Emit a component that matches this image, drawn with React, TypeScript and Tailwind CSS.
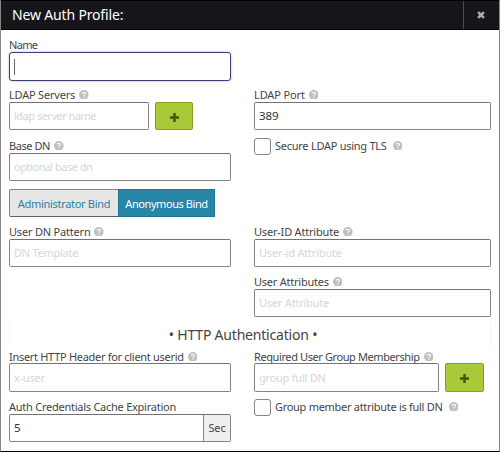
import type { ReactNode } from 'react';

function Help({ className = 'ml-1' }: { className?: string }) {
  return (
    <svg viewBox="0 0 10 10" className={`h-[9.6px] w-[9.6px] shrink-0 ${className}`}>
      <circle cx="5" cy="5" r="5" fill="#bfbfbf" />
      <path d="M3.3 3.9C3.4 2.9 4.1 2.3 5 2.3C6 2.3 6.7 2.9 6.7 3.7C6.7 4.8 5.1 4.9 5.1 6" fill="none" stroke="#fff" strokeWidth="1.2" />
      <rect x="4.5" y="6.8" width="1.2" height="1.2" fill="#fff" />
    </svg>
  );
}

function Label({ children, className = '', help = true, low = false }: { children: ReactNode; className?: string; help?: boolean; low?: boolean }) {
  return (
    <div className={`flex h-[15px] items-center whitespace-nowrap text-[#444] ${low ? 'pt-0.5' : ''}`}>
      <span className={className}>{children}</span>
      {help && <Help />}
    </div>
  );
}

function Input({ children, className = '', filled = false, size = 'h-7' }: { children?: ReactNode; className?: string; filled?: boolean; size?: string }) {
  return (
    <div className={`flex items-center rounded-[2px] border border-[#858585] border-t-[#737373] bg-white pl-1 pb-px ${size} ${filled ? 'text-[11.5px] text-[#333]' : 'text-[#d6d6d6]'}`}>
      <span className={`whitespace-nowrap ${className}`}>{children}</span>
    </div>
  );
}

function AddButton({ className = '' }: { className?: string }) {
  return (
    <button className={`flex items-center justify-center rounded-[2px] border border-[#81a021] bg-[#a9c938] pt-0.5 ${className}`}>
      <svg viewBox="0 0 9 9" className="h-[9px] w-[9px]">
        <path d="M3.3 0h2.4v3.3H9v2.4H5.7V9H3.3V5.7H0V3.3h3.3z" fill="#43530e" />
      </svg>
    </button>
  );
}

function Check({ children, className }: { children: ReactNode; className: string }) {
  return (
    <div className="flex h-[17px] items-center whitespace-nowrap text-[#444]">
      <span className="mr-1 h-[17px] w-[17px] shrink-0 rounded-[3px] border border-[#858585] bg-white" />
      <span className={`-mt-0.5 ${className}`}>{children}</span>
      <Help className="-mt-0.5 ml-1.5" />
    </div>
  );
}

export default function App() {
  return (
    <div className="flex h-[452px] w-[500px] flex-col overflow-hidden border border-t-0 border-[#858585] border-b-black bg-white font-['Noto_Sans',sans-serif] text-[11px] leading-[15px]">
      <header className="-mx-px flex h-[30px] shrink-0 items-stretch border border-black bg-[#16161a]">
        <h1 className="flex grow items-center pb-px pl-[11px] text-[14px] text-white">
          <span className="tracking-[-0.16px]">New Auth Profile:</span>
        </h1>
        <button className="flex w-[36px] items-center justify-center border-l border-[#4b4b50] pr-0.5">
          <svg viewBox="0 0 8 8" className="h-2 w-2">
            <path d="M1.1 1.1L6.9 6.9M6.9 1.1L1.1 6.9" stroke="#aaa" strokeWidth="2.7" />
          </svg>
        </button>
      </header>
      <main className="pl-2 pr-2">
        <section className="flex gap-[23px]">
          <div className="w-[222px] shrink-0 pt-[7px]">
            <Label className="tracking-[-0.7px]" help={false}>Name</Label>
            <div className="flex h-[29px] items-center rounded-[3px] border border-[#3d3d78] bg-white pl-1 shadow-[0_0_3px_#b9b9da]">
              <span className="h-4 w-px bg-[#666]" />
            </div>
            <div className="mt-1.5">
              <Label className="tracking-[-0.2px]">LDAP Servers</Label>
              <div className="flex">
                <div className="w-[140px]"><Input className="tracking-[-0.5px]">ldap server name</Input></div>
                <AddButton className="ml-1.5 h-7 w-[38px]" />
              </div>
            </div>
            <div className="mt-2">
              <Label className="tracking-[-0.43px]">Base DN</Label>
              <Input className="tracking-[-0.5px]">optional base dn</Input>
            </div>
            <div className="mt-2 flex h-7 whitespace-nowrap">
              <button className="flex w-[109px] items-center justify-center rounded-l-[2px] border border-r-0 border-[#858585] border-b-[#606060] bg-[#e6e6e6] text-[#2a83a4]"><span className="tracking-[-0.31px]">Administrator Bind</span></button>
              <button className="flex w-[97px] items-center justify-center border border-[#1d7595] bg-[#2785a6] text-white"><span className="tracking-[-0.43px]">Anonymous Bind</span></button>
            </div>
            <div className="mt-[7px]">
              <Label className="tracking-[-0.2px]">User DN Pattern</Label>
              <Input className="tracking-[-0.27px]">DN Template</Input>
            </div>
          </div>
          <div className="w-[237px] shrink-0 pt-[57px]">
            <Label className="tracking-[-0.12px]">LDAP Port</Label>
            <Input filled className="tracking-[-0.1px]">389</Input>
            <div className="mt-2"><Check className="tracking-[-0.26px]">Secure LDAP using TLS</Check></div>
            <div className="mt-[69px]">
              <Label className="tracking-[-0.2px]">User-ID Attribute</Label>
              <Input className="tracking-[-0.2px]">User-id Attribute</Input>
            </div>
            <div className="mt-[7px]">
              <Label className="tracking-[-0.23px]">User Attributes</Label>
              <Input className="tracking-[-0.22px]">User Attribute</Input>
            </div>
          </div>
        </section>
        <h2 className="mt-[5px] mb-0.5 flex h-6 items-center justify-center border-x border-[#f5f5f5] pr-3.5 text-[14px] text-[#444]"><span className="tracking-[-0.2px]">• HTTP Authentication •</span></h2>
        <section className="flex gap-[23px]">
          <div className="w-[222px] shrink-0">
            <Label low className="tracking-[-0.3px]">Insert HTTP Header for client userid</Label>
            <Input size="h-[29px]" className="tracking-[-0.25px]">x-user</Input>
            <div className="mt-[7px]">
              <Label className="tracking-[-0.25px]" help={false}>Auth Credentials Cache Expiration</Label>
              <div className="flex h-7 items-stretch overflow-hidden rounded-[2px] border border-[#858585] border-t-[#737373]">
                <span className="flex grow items-center pb-px pl-1 text-[11.5px] text-[#333]">5</span>
                <span className="flex w-[27px] items-center justify-center border-l border-[#858585] bg-[#eee] pb-px text-[#444]"><span className="tracking-[-0.1px]">Sec</span></span>
              </div>
            </div>
          </div>
          <div className="w-[237px] shrink-0">
            <Label low className="tracking-[-0.4px]">Required User Group Membership</Label>
            <div className="flex">
              <div className="w-[185px]"><Input size="h-[29px]" className="tracking-[-0.23px]">group full DN</Input></div>
              <AddButton className="ml-1.5 h-[29px] w-[39px]" />
            </div>
            <div className="mt-[7px]"><Check className="tracking-[-0.29px]">Group member attribute is full DN</Check></div>
          </div>
        </section>
      </main>
    </div>
  );
}
